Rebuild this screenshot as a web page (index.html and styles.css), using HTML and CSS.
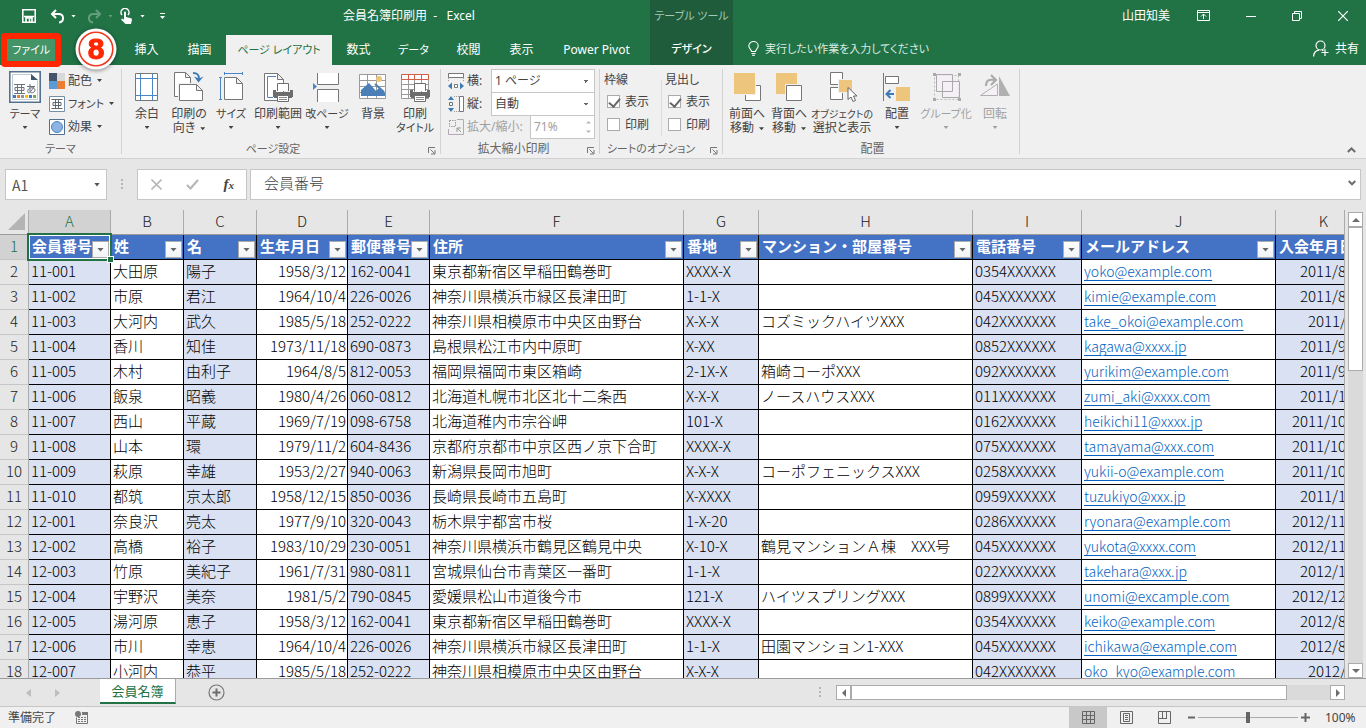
FILE: index.html
```html
<!DOCTYPE html>
<html lang="ja">
<head>
<meta charset="utf-8">
<title>会員名簿印刷用 - Excel</title>
<link rel="stylesheet" href="styles.css">
</head>
<body>
<svg class="defs" width="0" height="0" aria-hidden="true">
  <symbol id="printer" viewBox="0 0 22 19"><path d="M5.500 8V.5h11V8" fill="#fff" stroke="#6d6d6d"/><path d="M1 7h3v2h14V7h3v7h-1v1H2v-1H1z" fill="#6d6d6d"/><path d="M5.500 12.500h11v6h-11z" fill="#fff" stroke="#6d6d6d"/><path class="lines" d="M7 14.500h8M7 16.500h8"/></symbol>
  <symbol id="launch" viewBox="0 0 8 8"><path d="M.5 6V.5H7" fill="none" stroke="#777"/><path d="M2.500 2.500l4 4M7 3v4H3" fill="none" stroke="#777"/></symbol>
</svg>

<header class="top">
  <div class="titlebar">
    <div class="qat">
      <button aria-label="上書き保存"><svg width="16" height="16" viewBox="0 0 16 16"><path d="M1.800 1.800h12.400v12.400H1.800z" fill="none" stroke="#fff" stroke-width="1.600"/><path d="M3 8.500h10M5 14v-4h6v4M8.500 11v3" fill="none" stroke="#fff" stroke-width="1.600"/></svg></button>
      <button aria-label="元に戻す" class="undo"><svg width="15" height="15" viewBox="0 0 15 15"><path d="M6 1L2 5l4 4M2 5h6.500c6 0 6 8 .5 8.500" fill="none" stroke="#fff" stroke-width="2"/></svg><i class="caret"></i></button>
      <button aria-label="やり直し" class="dim"><svg width="15" height="15" viewBox="0 0 15 15"><path d="M9 1l4 4-4 4M13 5H6.500C.5 5 .5 13 6 13.500" fill="none" stroke="#fff" stroke-width="2"/></svg><i class="caret"></i></button>
      <button aria-label="タッチ/マウス モード" class="touch"><svg width="14" height="17" viewBox="0 0 14 17"><path d="M2 7a4 4 0 1 1 6 0" fill="none" stroke="#fff" stroke-width="1.500"/><path d="M4 4.500c0-1.500 2-1.500 2 0V9l5 1.200c1 .3 1 1 .9 2L11 16H5.500L1.500 12c-.8-1 .3-1.700 1-1.200L4 11.700z" fill="#fff"/></svg><i class="caret"></i></button>
      <button aria-label="クイック アクセス ツール バーのカスタマイズ" class="custom"><svg width="5" height="7" viewBox="0 0 5 7"><path d="M0 .5h5" stroke="#fff"/><path d="M0 3h5L2.500 6z" fill="#fff"/></svg></button>
    </div>
    <h1>会員名簿印刷用&nbsp; -&nbsp;&nbsp; Excel</h1>
  </div>
  <div class="context kana">テーブル ツール</div>
  <div class="window">
    <span class="user">山田知美</span>
    <button aria-label="リボンの表示オプション"><svg width="13" height="12" viewBox="0 0 13 12"><path d="M.5.500h12v10H.5zM.5 2.500h12M6.500 9V4M4 6.500L6.500 4 9 6.500" fill="none" stroke="#fff"/></svg></button>
    <button aria-label="最小化"><svg width="10" height="10" viewBox="0 0 10 10"><path d="M0 5.500h10" stroke="#fff"/></svg></button>
    <button aria-label="元のサイズに戻す"><svg width="10" height="10" viewBox="0 0 10 10"><path d="M.5 2.500h7v7h-7zM2.500 2V.5h7v7H8" fill="none" stroke="#fff"/></svg></button>
    <button aria-label="閉じる"><svg width="10" height="10" viewBox="0 0 10 10"><path d="M0 0l10 10M10 0L0 10" stroke="#fff" stroke-width="1.200"/></svg></button>
  </div>

  <nav class="tabs">
    <div class="file-slot"><button class="file kana">ファイル</button><span class="step"><svg width="42" height="42" viewBox="0 0 42 42"><circle cx="21" cy="21" r="20.500" fill="#fff"/><circle cx="21" cy="21" r="16.800" fill="none" stroke="#f0391f" stroke-width="1.600"/></svg><b>8</b></span></div>
    <button class="w53">挿入</button><button class="w53">描画</button><button class="w106 active kana">ページ レイアウト</button><button class="w53">数式</button><button class="w57 kana">データ</button><button class="w53">校閲</button><button class="w53">表示</button><button class="w97">Power Pivot</button>
  </nav>
  <button class="design kana">デザイン</button>
  <div class="tell">
    <button class="kana"><svg width="11" height="15" viewBox="0 0 11 15"><path d="M3.500 10.500C3.500 8.500.8 7.500.8 5a4.700 4.500 0 0 1 9.400 0c0 2.500-2.700 3.500-2.700 5.500zM3.500 12.500h4M4 14.300h3" fill="none" stroke="#fff" stroke-width="1.100"/></svg>実行したい作業を入力してください</button>
    <button><svg width="16" height="17" viewBox="0 0 16 17"><circle cx="7.500" cy="5.500" r="4.500" fill="none" stroke="#fff" stroke-width="1.200"/><path d="M.6 16.500C.8 13 3 10.500 6 10.200M9 10.200l1.500.6M12 9v7M8.500 12.500h7" fill="none" stroke="#fff" stroke-width="1.200"/></svg>共有</button>
  </div>
</header>

<section class="ribbon">
  <div class="group themes">
    <div class="tools">
      <button class="big"><svg width="32" height="32" viewBox="0 0 32 32"><path d="M.8.800h30.400v30.400H.8z" fill="#fff" stroke="#54708f" stroke-width="1.600"/><path d="M3.500 3.500h19l6 6v19h-25z" fill="#fff" stroke="#c3cad3"/><path d="M22 3v6h7z" fill="#44546a"/><path d="M5 13.500h11M5 22.500h11M8.500 13.500v9M12.500 13.500v9M6 16.500h9v3H6z" fill="none" stroke="#68737f"/><path d="M18 15.500h8M21 13v7c0 3 5 2 5-1s-6-3-7 0 1 4 3 1l3-4" fill="none" stroke="#68737f"/><path d="M4 24h3v3H4z" fill="#4472c4"/><path d="M8 24h3v3H8z" fill="#ed7d31"/><path d="M12 24h3v3h-3z" fill="#8f9299"/><path d="M16 24h3v3h-3z" fill="#ffc000"/><path d="M20 24h3v3h-3z" fill="#4178c8"/><path d="M24 24h3v3h-3z" fill="#70ad47"/></svg><span class="kana">テーマ</span><i class="caret"></i></button>
      <div class="stack">
        <button><svg width="16" height="16" viewBox="0 0 16 16"><path d="M0 0h8v8H0z" fill="#44546a"/><path d="M8 0h8v8H8z" fill="#d9d9d9"/><path d="M0 8h8v8H0z" fill="#5b9bd5"/><path d="M8 8h8v8H8z" fill="#ed7d31"/></svg>配色<i class="caret"></i></button>
        <button class="kana"><svg width="16" height="16" viewBox="0 0 16 16"><path d="M.5.500h15v15H.5z" fill="#fff" stroke="#7590ac"/><path d="M2.500 3.500h11M2.500 12.500h11M6.500 3.500v9M9.500 3.500v9M4 6.500h8v3H4z" fill="none" stroke="#62676d"/></svg>フォント<i class="caret"></i></button>
        <button><svg width="16" height="16" viewBox="0 0 16 16"><path d="M.5.500h15v15H.5z" fill="#fff" stroke="#54708f"/><circle cx="8" cy="8" r="5.500" fill="#8db4e3" stroke="#4a84c4"/></svg>効果<i class="caret"></i></button>
      </div>
    </div>
    <h2 class="kana">テーマ</h2>
  </div>

  <div class="group setup">
    <div class="tools">
      <button class="big w42"><svg width="32" height="32" viewBox="0 0 32 32"><path d="M4.500 2.500h22v27h-22z" fill="#fff" stroke="#777"/><path d="M9.500 3v26M21.500 3v26M5 7.500h21M5 24.500h21" stroke="#4a86c5" fill="none"/></svg><span>余白</span><i class="caret"></i></button>
      <button class="big w42"><svg width="32" height="32" viewBox="0 0 32 32"><path d="M1.500 1.500h11l5 5v19h-16zM12.500 1.500v5h5" fill="#fff" stroke="#777"/><path d="M5 12h20l6 6v13H5z" fill="#f0f0f0"/><path d="M6.500 13.500h17l6 6v10h-23zM23.500 13.500v6h6" fill="#fff" stroke="#777"/><path d="M20 2c5 0 6 2 6 6" fill="none" stroke="#3d7ab8" stroke-width="2"/><path d="M21 5.500l4.500 6 5-6-4.500 2z" fill="#3d7ab8"/></svg><span>印刷の<br>向き<i class="caret"></i></span></button>
      <button class="big w42"><svg width="32" height="32" viewBox="0 0 32 32"><path d="M9.500 6.500h12l6 6v16h-18zM21.500 6.500v6h6" fill="#fff" stroke="#777"/><path d="M9.500 2.500h18M9.500 1v3M27.500 1v3M5.500 6.500v22M4 6.500h3M4 28.500h3" stroke="#4a86c5" fill="none"/></svg><span class="kana">サイズ</span><i class="caret"></i></button>
      <button class="big w52"><svg width="32" height="32" viewBox="0 0 32 32"><path d="M2.500 2.500h13l6 6v21h-19zM15.500 2.500v6h6" fill="#fff" stroke="#777"/><path d="M14 5.500H5.500v21H11" stroke="#4a86c5" fill="none"/><use href="#printer" x="10" y="12" width="22" height="19"/></svg><span>印刷範囲</span><i class="caret"></i></button>
      <button class="big w46"><svg width="32" height="32" viewBox="0 0 32 32"><path d="M6.500 2v11.500h21V2M6.500 31V18.500h21V31" fill="#fff" stroke="#777"/><path d="M2 12v7l4-3.500z" fill="#4a86c5"/></svg><span class="kana">改ページ</span><i class="caret"></i></button>
      <button class="big w46"><svg width="32" height="32" viewBox="0 0 32 32"><path d="M2.500 3.500h26v24h-26zM2.500 9.500h26M2.500 15.500h26M2.500 21.500h26M10.500 3v24M19.500 3v24" fill="#fff" stroke="#9a9a9a"/><path d="M4 25v-6l8-7 7 8 3-3 6 5v3z" fill="#4a7fb8"/><path d="M18 13l9 8" stroke="#4a7fb8" stroke-width="2"/><circle cx="22" cy="8" r="3" fill="#edc57c"/></svg><span>背景</span></button>
      <button class="big w38"><svg width="32" height="32" viewBox="0 0 32 32"><path d="M2.500 3.500h27v24h-27zM2.500 13.500h27M2.500 18.500h27M2.500 23.500h27M9.500 8v20M15.500 8v20M22.500 8v20" fill="#fff" stroke="#9a9a9a"/><path d="M2.500 3.500h27v5h-27zM9.500 3v5M15.500 3v5M22.500 3v5" fill="#fff" stroke="#d35f48"/><g class="blue"><use href="#printer" x="10" y="12" width="22" height="19"/></g></svg><span>印刷<br><small class="kana">タイトル</small></span></button>
    </div>
    <h2 class="kana">ページ設定</h2>
    <button class="launch" aria-label="ページ設定"><svg width="8" height="8"><use href="#launch"/></svg></button>
  </div>

  <div class="group scale">
    <div class="tools rows">
      <div class="row"><svg width="16" height="16" viewBox="0 0 16 16"><path d="M.5.500h15v4H.5z" fill="#fff" stroke="#777"/><path d="M6.500 11.500h3v3h-3z" fill="#fff" stroke="#777"/><path d="M0 13l4-3.500v7zM16 13l-4-3.500v7z" fill="#3d7ab8"/><path d="M.5 5v4M15.500 5v4" stroke="#999" stroke-dasharray="1 1"/></svg><label for="sw">横:</label><select id="sw"><option>1 ページ</option></select></div>
      <div class="row"><svg width="16" height="16" viewBox="0 0 16 16"><path d="M11.500.500h4v15h-4z" fill="#fff" stroke="#777"/><path d="M1.500 6.500h3v3h-3z" fill="#fff" stroke="#777"/><path d="M3 0L0 4h6zM3 16l-3-4h6z" fill="#3d7ab8"/><path d="M6 .5h5M6 15.500h5" stroke="#999" stroke-dasharray="1 1"/></svg><label for="sh">縦:</label><select id="sh"><option>自動</option></select></div>
      <div class="row off"><svg width="16" height="16" viewBox="0 0 16 16"><path d="M9 .5h6.500v15H.5V10" fill="none" stroke="#b5a9b8"/><path d="M1.500 1.500h6v6h-6z" fill="none" stroke="#999" stroke-dasharray="1.500 1"/><path d="M13 13L9 9M9 13V9h4" stroke="#999" fill="none"/></svg><label for="sp">拡大/縮小:</label><div class="spin"><input id="sp" value="71%" disabled><svg width="5" height="14" viewBox="0 0 5 14"><path d="M0 3.500L2.500 1 5 3.500zM0 10.500L2.500 13 5 10.500z" fill="#b5b5b5"/></svg></div></div>
    </div>
    <h2>拡大縮小印刷</h2>
    <button class="launch" aria-label="拡大縮小印刷"><svg width="8" height="8"><use href="#launch"/></svg></button>
  </div>

  <div class="group options">
    <div class="tools">
      <fieldset><legend>枠線</legend><label><input type="checkbox" checked>表示</label><label><input type="checkbox">印刷</label></fieldset>
      <fieldset><legend>見出し</legend><label><input type="checkbox" checked>表示</label><label><input type="checkbox">印刷</label></fieldset>
    </div>
    <h2 class="kana">シートのオプション</h2>
    <button class="launch" aria-label="シートのオプション"><svg width="8" height="8"><use href="#launch"/></svg></button>
  </div>

  <div class="group arrange">
    <div class="tools">
      <button class="big w42"><svg width="32" height="32" viewBox="0 0 32 32"><path d="M14.500 14.500h15v15h-15z" fill="#fff" stroke="#777"/><path d="M2 1h23v23H2z" fill="#f0f0f0"/><path d="M3 2h21v21H3z" fill="#edc57c"/></svg><span>前面へ<br>移動<i class="caret"></i></span></button>
      <button class="big w42"><svg width="32" height="32" viewBox="0 0 32 32"><path d="M3 2h21v21H3z" fill="#edc57c"/><path d="M12 13h18v18H12z" fill="#f0f0f0"/><path d="M13.500 14.500h15v15h-15z" fill="#fff" stroke="#777"/></svg><span>背面へ<br>移動<i class="caret"></i></span></button>
      <button class="big w64"><svg width="32" height="32" viewBox="0 0 32 32"><path d="M4.500 1.500h12v12h-12zM4.500 16.500h12v12h-12z" fill="#fff" stroke="#777"/><path d="M12 8h15v14H12z" fill="#f0f0f0"/><path d="M13 9h13v12H13z" fill="#edc57c"/><path d="M22 16.500v12l3-2.500 2 4.500 2.500-1-2-4.500H31z" fill="#fff" stroke="#666"/></svg><span><small class="tight">オブジェクトの</small><br>選択と表示</span></button>
      <button class="big w46"><svg width="32" height="32" viewBox="0 0 32 32"><path d="M2.500 2v28" stroke="#777"/><path d="M4.500 5.500h13v7h-13z" fill="#fff" stroke="#777"/><path d="M15 16h14v14H15z" fill="#edc57c"/><path d="M13 23H6M9.500 19L5.500 23l4 4" fill="none" stroke="#3d7ab8" stroke-width="2"/></svg><span>配置</span><i class="caret"></i></button>
      <button class="big w52 off"><svg width="32" height="32" viewBox="0 0 32 32"><path d="M4.500 4.500h24v24h-24z" fill="none" stroke="#bbb" stroke-dasharray="2 2"/><path d="M6.500 3.500h16v17h-16zM12.500 10.500h17v16h-17z" fill="#f5f0f6" fill-opacity=".7" stroke="#a9a9a9"/><path d="M3 2h3v3H3zM28 2h3v3h-3zM3 27h3v3H3zM28 27h3v3h-3z" fill="#a9a9a9"/></svg><span class="kana">グループ化</span><i class="caret"></i></button>
      <button class="big w46 off"><svg width="32" height="32" viewBox="0 0 32 32"><path d="M1.500 24.500h17V13z" fill="#f5f0f6" stroke="#b0b0b0"/><path d="M20 5v20h11z" fill="#b0b0b0"/><path d="M7 15c0-6 3-7 9-6M12 4l5 5-5 5" fill="none" stroke="#a9a9a9" stroke-width="2"/></svg><span>回転</span><i class="caret"></i></button>
    </div>
    <h2>配置</h2>
  </div>
  <button class="collapse" aria-label="リボンを折りたたむ"><svg width="9" height="6" viewBox="0 0 9 6"><path d="M.8 5l3.700-3.500L8.200 5" fill="none" stroke="#6d6d6d" stroke-width="2"/></svg></button>
</section>

<section class="formula">
  <div class="name"><input aria-label="名前ボックス" value="A1"><i class="caret"></i></div>
  <span class="grip"></span>
  <div class="fx">
    <button aria-label="キャンセル"><svg width="11" height="11" viewBox="0 0 11 11"><path d="M.5.500l10 10M10.500.500l-10 10" stroke="#b8b8b8" stroke-width="1.600"/></svg></button>
    <button aria-label="入力"><svg width="13" height="11" viewBox="0 0 13 11"><path d="M1 6l3.500 3.500L12 1" fill="none" stroke="#b8b8b8" stroke-width="2.200"/></svg></button>
    <button aria-label="関数の挿入" class="fn">f<small>x</small></button>
  </div>
  <div class="bar"><input aria-label="数式バー" value="会員番号"><svg width="8" height="6" viewBox="0 0 8 6"><path d="M.7 1L4 4.300 7.300 1" fill="none" stroke="#6d6d6d" stroke-width="2"/></svg></div>
</section>

<main class="work">
  <div class="sheet">
    <table>
      <colgroup><col class="c-n"><col class="c-a"><col class="c-b"><col class="c-b"><col class="c-d"><col class="c-a"><col class="c-f"><col class="c-g"><col class="c-h"><col class="c-i"><col class="c-j"><col class="c-k"></colgroup>
      <thead><tr><th class="corner"><svg width="17" height="17" viewBox="0 0 17 17"><path d="M17 0v17H0z" fill="#b4b4b4"/></svg></th><th class="sel">A</th><th>B</th><th>C</th><th>D</th><th>E</th><th>F</th><th>G</th><th>H</th><th>I</th><th>J</th><th>K</th></tr></thead>
      <tbody>
      <tr class="heads"><th class="sel">1</th><td class="cursor"><div>会員番号<button aria-label="会員番号の絞り込み"></button></div></td><td><div>姓<button aria-label="姓の絞り込み"></button></div></td><td><div>名<button aria-label="名の絞り込み"></button></div></td><td><div>生年月日<button aria-label="生年月日の絞り込み"></button></div></td><td><div>郵便番号<button aria-label="郵便番号の絞り込み"></button></div></td><td><div>住所<button aria-label="住所の絞り込み"></button></div></td><td><div>番地<button aria-label="番地の絞り込み"></button></div></td><td><div>マンション・部屋番号<button aria-label="部屋番号の絞り込み"></button></div></td><td><div>電話番号<button aria-label="電話番号の絞り込み"></button></div></td><td><div>メールアドレス<button aria-label="メールアドレスの絞り込み"></button></div></td><td><div>入会年月日</div></td></tr>
      <tr><th>2</th><td>11-001</td><td>大田原</td><td>陽子</td><td>1958/3/12</td><td>162-0041</td><td>東京都新宿区早稲田鶴巻町</td><td>XXXX-X</td><td></td><td>0354XXXXXX</td><td><a href="#">yoko@example.com</a></td><td class="m">2011/8</td></tr>
      <tr><th>3</th><td>11-002</td><td>市原</td><td>君江</td><td>1964/10/4</td><td>226-0026</td><td>神奈川県横浜市緑区長津田町</td><td>1-1-X</td><td></td><td>045XXXXXXX</td><td><a href="#">kimie@example.com</a></td><td class="m">2011/8</td></tr>
      <tr><th>4</th><td>11-003</td><td>大河内</td><td>武久</td><td>1985/5/18</td><td>252-0222</td><td>神奈川県相模原市中央区由野台</td><td>X-X-X</td><td>コズミックハイツXXX</td><td>042XXXXXXX</td><td><a href="#">take_okoi@example.com</a></td><td class="s">2011/</td></tr>
      <tr><th>5</th><td>11-004</td><td>香川</td><td>知佳</td><td>1973/11/18</td><td>690-0873</td><td>島根県松江市内中原町</td><td>X-XX</td><td></td><td>0852XXXXXX</td><td><a href="#">kagawa@xxxx.jp</a></td><td class="m">2011/9</td></tr>
      <tr><th>6</th><td>11-005</td><td>木村</td><td>由利子</td><td>1964/8/5</td><td>812-0053</td><td>福岡県福岡市東区箱崎</td><td>2-1X-X</td><td>箱崎コーポXXX</td><td>092XXXXXXX</td><td><a href="#">yurikim@example.com</a></td><td class="m">2011/9</td></tr>
      <tr><th>7</th><td>11-006</td><td>飯泉</td><td>昭義</td><td>1980/4/26</td><td>060-0812</td><td>北海道札幌市北区北十二条西</td><td>X-X-X</td><td>ノースハウスXXX</td><td>011XXXXXXX</td><td><a href="#">zumi_aki@xxxx.com</a></td><td class="m">2011/1</td></tr>
      <tr><th>8</th><td>11-007</td><td>西山</td><td>平蔵</td><td>1969/7/19</td><td>098-6758</td><td>北海道稚内市宗谷岬</td><td>101-X</td><td></td><td>0162XXXXXX</td><td><a href="#">heikichi11@xxxx.jp</a></td><td class="l">2011/10</td></tr>
      <tr><th>9</th><td>11-008</td><td>山本</td><td>環</td><td>1979/11/2</td><td>604-8436</td><td>京都府京都市中京区西ノ京下合町</td><td>XXXX-X</td><td></td><td>075XXXXXXX</td><td><a href="#">tamayama@xxx.com</a></td><td class="l">2011/10</td></tr>
      <tr><th>10</th><td>11-009</td><td>萩原</td><td>幸雄</td><td>1953/2/27</td><td>940-0063</td><td>新潟県長岡市旭町</td><td>X-X-X</td><td>コーポフェニックスXXX</td><td>0258XXXXXX</td><td><a href="#">yukii-o@example.com</a></td><td class="l">2011/10</td></tr>
      <tr><th>11</th><td>11-010</td><td>都筑</td><td>京太郎</td><td>1958/12/15</td><td>850-0036</td><td>長崎県長崎市五島町</td><td>X-XXXX</td><td></td><td>0959XXXXXX</td><td><a href="#">tuzukiyo@xxx.jp</a></td><td class="m">2011/1</td></tr>
      <tr><th>12</th><td>12-001</td><td>奈良沢</td><td>亮太</td><td>1977/9/10</td><td>320-0043</td><td>栃木県宇都宮市桜</td><td>1-X-20</td><td></td><td>0286XXXXXX</td><td><a href="#">ryonara@example.com</a></td><td class="l">2012/11</td></tr>
      <tr><th>13</th><td>12-002</td><td>高橋</td><td>裕子</td><td>1983/10/29</td><td>230-0051</td><td>神奈川県横浜市鶴見区鶴見中央</td><td>X-10-X</td><td>鶴見マンションＡ棟　XXX号</td><td>045XXXXXXX</td><td><a href="#">yukota@xxxx.com</a></td><td class="l">2012/11</td></tr>
      <tr><th>14</th><td>12-003</td><td>竹原</td><td>美紀子</td><td>1961/7/31</td><td>980-0811</td><td>宮城県仙台市青葉区一番町</td><td>1-1-X</td><td></td><td>022XXXXXXX</td><td><a href="#">takehara@xxx.jp</a></td><td class="m">2012/1</td></tr>
      <tr><th>15</th><td>12-004</td><td>宇野沢</td><td>美奈</td><td>1981/5/2</td><td>790-0845</td><td>愛媛県松山市道後今市</td><td>121-X</td><td>ハイツスプリングXXX</td><td>0899XXXXXX</td><td><a href="#">unomi@excample.com</a></td><td class="l">2012/12</td></tr>
      <tr><th>16</th><td>12-005</td><td>湯河原</td><td>恵子</td><td>1958/3/12</td><td>162-0041</td><td>東京都新宿区早稲田鶴巻町</td><td>XXXX-X</td><td></td><td>0354XXXXXX</td><td><a href="#">keiko@example.com</a></td><td class="m">2012/8</td></tr>
      <tr><th>17</th><td>12-006</td><td>市川</td><td>幸恵</td><td>1964/10/4</td><td>226-0026</td><td>神奈川県横浜市緑区長津田町</td><td>1-1-X</td><td>田園マンション1-XXX</td><td>045XXXXXXX</td><td><a href="#">ichikawa@example.com</a></td><td class="m">2012/8</td></tr>
      <tr><th>18</th><td>12-007</td><td>小河内</td><td>恭平</td><td>1985/5/18</td><td>252-0222</td><td>神奈川県相模原市中央区由野台</td><td>X-X-X</td><td></td><td>042XXXXXXX</td><td><a href="#">oko_kyo@example.com</a></td><td class="s">2012/</td></tr>
      </tbody>
    </table>
  </div>
  <div class="vscroll">
    <button aria-label="上へスクロール"><svg width="8" height="4" viewBox="0 0 8 4"><path d="M0 4l4-4 4 4z" fill="#6d6d6d"/></svg></button>
    <div class="track"><div class="thumb"></div></div>
    <button aria-label="下へスクロール"><svg width="8" height="4" viewBox="0 0 8 4"><path d="M0 0l4 4 4-4z" fill="#6d6d6d"/></svg></button>
  </div>
</main>

<nav class="sheets">
  <div class="steps"><svg width="5" height="8" viewBox="0 0 5 8"><path d="M5 0v8L0 4z" fill="#bdbdbd"/></svg><svg width="5" height="8" viewBox="0 0 5 8"><path d="M0 0v8l5-4z" fill="#bdbdbd"/></svg></div>
  <button class="sheet-tab">会員名簿</button>
  <button class="add" aria-label="新しいシート"><svg width="17" height="17" viewBox="0 0 17 17"><circle cx="8.500" cy="8.500" r="7.500" fill="none" stroke="#777" stroke-width="1.200"/><path d="M8.500 4.500v8M4.500 8.500h8" stroke="#6d6d6d" stroke-width="2"/></svg></button>
  <span class="grip"></span>
  <div class="hscroll">
    <button aria-label="左へスクロール"><svg width="4" height="8" viewBox="0 0 4 8"><path d="M4 0v8L0 4z" fill="#6d6d6d"/></svg></button>
    <div class="track"><div class="thumb"></div></div>
    <button aria-label="右へスクロール"><svg width="4" height="8" viewBox="0 0 4 8"><path d="M0 0v8l4-4z" fill="#6d6d6d"/></svg></button>
  </div>
</nav>

<footer class="status">
  <span>準備完了</span>
  <svg class="macro" width="13" height="13" viewBox="0 0 13 13"><circle cx="3" cy="3" r="3" fill="#777"/><path d="M7 1h6v3H7z" fill="#777"/><path d="M1.500 6.500v6h11v-9" fill="none" stroke="#777"/><path d="M3 6.500h8M3 8.500h8M3 10.500h8" stroke="#777" stroke-dasharray="2 1"/></svg>
  <div class="views">
    <button class="on" aria-label="標準"><svg width="13" height="13" viewBox="0 0 13 13"><path d="M.5.500h12v12H.5zM4.500 0v13M8.500 0v13M0 4.500h13M0 8.500h13" fill="none" stroke="#666"/></svg></button>
    <button aria-label="ページ レイアウト"><svg width="13" height="13" viewBox="0 0 13 13"><path d="M.5.500h12v12H.5zM3.500 2.500h6v8h-6zM5 4.500h3M5 6.500h3M5 8.500h3" fill="none" stroke="#666"/></svg></button>
    <button aria-label="改ページ プレビュー"><svg width="13" height="13" viewBox="0 0 13 13"><path d="M.5.500h12v12H.5zM4.500 0v7.500M8.500 0v7.500M1 7.500h8" fill="none" stroke="#666"/></svg></button>
  </div>
  <div class="zoom"><button aria-label="縮小"><svg width="7" height="9" viewBox="0 0 7 9"><path d="M0 4.500h7" stroke="#666" stroke-width="2"/></svg></button><input type="range" aria-label="ズーム" min="0" max="200" value="100"><button aria-label="拡大"><svg width="9" height="9" viewBox="0 0 9 9"><path d="M0 4.500h9M4.500 0v9" stroke="#666" stroke-width="2"/></svg></button></div>
  <span class="percent">100%</span>
</footer>
</body>
</html>
```
FILE: styles.css
```css
* { box-sizing: border-box; }
html, body { height: 100%; }
body {
  margin: 0;
  display: flex;
  flex-direction: column;
  overflow: hidden;
  background: #e6e6e6;
  color: #444;
  font: 12px/14px "Noto Sans", "Noto Sans CJK JP", sans-serif;
}
.defs { position: absolute; }
button, input, select {
  font: inherit;
  color: inherit;
  background: none;
  border: 0;
  padding: 0;
  margin: 0;
}
h1, h2 { margin: 0; font: inherit; }
svg { display: block; flex: none; }
.kana { font-size: 11px; }
.tight { font-size: 10px; }
.caret {
  display: inline-block;
  width: 5px;
  height: 3px;
  background: currentColor;
  clip-path: polygon(0 0, 100% 0, 50% 100%);
  vertical-align: middle;
}
.blue .lines { stroke: #3d7ab8; }
.lines { stroke: #8a8a8a; }

/* title bar and tabs */
.top {
  display: grid;
  grid-template-columns: 650px 83px 1fr;
  grid-template-rows: 32px 33px;
  background: #217346;
  color: #fff;
  font-feature-settings: "palt";
}
.titlebar { display: flex; align-items: center; }
.qat { display: flex; align-items: center; width: 343px; padding-left: 21px; gap: 11px; }
.qat button { display: flex; align-items: center; gap: 6px; height: 32px; }
.qat .undo { margin-left: 2px; }
.qat .dim { opacity: .3; }
.qat .touch { margin-left: -4px; }
.qat .custom { margin-left: 4px; }
.context { background: #1e5c3b; color: #a5c7b3; line-height: 32px; text-align: center; }
.window { display: flex; justify-content: flex-end; align-items: center; padding-right: 18px; }
.window button { display: flex; margin-left: 36px; }
.window .user { font-feature-settings: normal; margin-right: -9px; }
.tabs { display: flex; align-items: flex-end; }
.tabs > button { height: 30px; }
.tabs .active { background: #f0f0f0; color: #217346; }
.w38 { width: 38px; } .w42 { width: 42px; } .w46 { width: 46px; } .w52 { width: 52px; }
.w53 { width: 53px; } .w57 { width: 57px; } .w64 { width: 64px; } .w97 { width: 97px; } .w106 { width: 106px; }
.file-slot { position: relative; width: 120px; height: 33px; z-index: 1; }
.file {
  position: absolute;
  left: 1px;
  top: 1px;
  width: 60px;
  height: 34px;
  border: 6px solid #ff2600;
  border-radius: 4px;
  background: #439467;
}
.step { position: absolute; left: 75px; top: -4px; width: 42px; height: 42px; filter: drop-shadow(0 1px 2px #0007); }
.step b {
  position: absolute;
  inset: 0;
  font: bold 30px/42px "Liberation Sans", sans-serif;
  color: #ff2600;
  -webkit-text-stroke: 1px #ff2600;
  text-align: center;
}
.design { background: #1e5c3b; font-weight: 500; }
.tell { display: flex; justify-content: space-between; padding: 0 7px 0 15px; }
.tell button { display: flex; align-items: center; gap: 6px; }
.tell .kana { color: #dcebe2; }

/* ribbon */
.ribbon {
  position: relative;
  display: flex;
  background: #f0f0f0;
  border-bottom: 1px solid #d2d2d2;
  padding: 4px 0;
  font-feature-settings: "palt";
}
.group {
  position: relative;
  display: flex;
  flex-direction: column;
  justify-content: space-between;
  min-height: 85px;
  border-right: 1px solid #d2d2d2;
}
.group h2 { text-align: center; color: #666; line-height: 10px; }
.setup h2, .scale h2, .options h2 { padding-right: 20px; }
.tools { display: flex; align-items: flex-start; }
.big { display: flex; flex-direction: column; align-items: center; padding-top: 2px; white-space: nowrap; }
.big span { margin-top: 4px; line-height: 14px; }
.big > .caret { margin-top: 5px; }
.big span .caret, .stack .caret { margin-left: 5px; }
.off { color: #a0a0a0; }
.themes { width: 122px; }
.themes .tools { padding-left: 9px; gap: 8px; }
.stack { display: flex; flex-direction: column; }
.stack button { display: flex; align-items: center; height: 23px; }
.stack svg { margin-right: 3px; }
.setup { width: 319px; padding-left: 4px; }
.scale { width: 159px; padding-left: 7px; }
.options { width: 123px; }
.arrange { width: 297px; padding-left: 3px; }
.launch { position: absolute; right: 4px; bottom: -1px; }
.collapse { position: absolute; right: 10px; bottom: 5px; }
.rows { flex-direction: column; padding-right: 4px; }
.row { display: flex; align-items: center; width: 100%; height: 23px; gap: 3px; white-space: nowrap; }
.row select, .spin {
  margin-left: auto;
  width: 104px;
  height: 24px;
  border: 1px solid #c6c6c6;
  padding: 0 3px;
  background-color: #fff;
}
.row select {
  appearance: none;
  background: linear-gradient(to bottom left, #666 50%, transparent 50%) 91px 10px / 3px 3px no-repeat,
    linear-gradient(to bottom right, #666 50%, transparent 50%) 94px 10px / 3px 3px no-repeat, #fff;
}
.spin { display: flex; align-items: center; width: 65px; }
.spin input { flex: 1; min-width: 0; }
.options .tools { padding: 0 0 0 4px; }
fieldset { border: 0; margin: 0; padding: 0; width: 61px; }
fieldset + fieldset { border-left: 1px solid #dcdcdc; padding-left: 3px; margin-left: -4px; }
legend { padding: 0; line-height: 21px; }
fieldset label { display: flex; align-items: center; gap: 5px; height: 23px; margin-left: 3px; }
input[type=checkbox] {
  appearance: none;
  position: relative;
  width: 13px;
  height: 13px;
  background: #fff;
  border: 1px solid #ababab;
}
input[type=checkbox]:checked::after {
  content: "";
  position: absolute;
  left: 3px;
  top: 0;
  width: 5px;
  height: 9px;
  border: solid #666;
  border-width: 0 2px 2px 0;
  transform: rotate(40deg);
}

/* formula bar */
.formula { display: flex; align-items: center; padding: 10px 5px; height: 51px; font: 14px/20px "Noto Sans CJK JP", sans-serif; }
.name, .fx, .bar { display: flex; align-items: center; height: 31px; background: #fff; border: 1px solid #c6c6c6; }
.name { width: 102px; padding: 0 6px; color: #555; }
.name input { width: 82px; }
.name .caret { width: 7px; height: 4px; }
.grip { width: 2px; height: 11px; background: repeating-linear-gradient(#b5b5b5 0 2px, transparent 2px 4px); }
.formula .grip { margin: 0 14px; }
.fx { width: 110px; justify-content: space-between; padding: 0 12px 0 13px; }
.fn { font: italic bold 15px/20px "Liberation Serif", serif; }
.fn small { font-size: 11px; }
.bar { flex: 1; margin-left: 3px; padding: 0 4px 3px 13px; font-size: 15px; font-weight: 300; }
.bar input { flex: 1; }

/* grid */
.work { flex: 1; min-height: 0; display: flex; border-bottom: 1px solid #9b9b9b; }
.sheet { flex: 1; min-width: 0; overflow: hidden; border-right: 1px solid #ababab; }
table {
  table-layout: fixed;
  width: 1372px;
  border-collapse: separate;
  border-spacing: 0;
  font: 300 15px/22px "Noto Sans CJK JP", sans-serif;
}
.c-n { width: 29px; } .c-a { width: 82px; } .c-b { width: 73px; } .c-d { width: 91px; }
.c-f { width: 254px; } .c-g { width: 75px; } .c-h { width: 214px; } .c-i { width: 109px; }
.c-j { width: 194px; } .c-k { width: 96px; }
th, td { height: 25px; padding: 0; white-space: nowrap; overflow: hidden; vertical-align: top; }
th { background: #e6e6e6; color: #222; font-weight: 300; border-right: 1px solid #ababab; border-bottom: 1px solid #c6c6c6; }
thead th { border-bottom-color: #9b9b9b; }
.corner svg { margin: 3px 0 0 8px; }
th.sel { background: #d2d2d2; color: #217346; }
td {
  padding-left: 2px;
  background: #fff;
  color: #000;
  border-right: 1px solid #000;
  border-bottom: 1px solid #000;
}
td:nth-child(2), td:nth-child(4), td:nth-child(6), td:nth-child(8), td:nth-child(10), td:nth-child(12) { background: #d9e1f2; }
td:nth-child(5) { text-align: right; padding: 0 1px 0 0; }
td.s { padding-left: 32px; }
td.m { padding-left: 24px; }
td.l { padding-left: 16px; }
td a { color: #0563c1; font-size: 14px; text-underline-offset: 3px; text-decoration-thickness: 1px; }
tr.heads td { background: #4472c4; color: #fff; font-weight: 700; padding: 0 1px 0 3px; text-align: left; }
.heads div { display: flex; justify-content: space-between; height: 24px; }
.heads div button {
  flex: none;
  align-self: flex-end;
  display: grid;
  place-items: center;
  width: 17px;
  height: 17px;
  margin: 0 0 1px -4px;
  border: 1px solid #ababab;
  background: linear-gradient(#fff, #f0f2f5);
}
.heads button::after { content: ""; width: 7px; height: 4px; background: #666; clip-path: polygon(0 0, 100% 0, 50% 100%); }
td.cursor { position: relative; overflow: visible; }
.cursor::before { content: ""; position: absolute; inset: -2px; border: 2px solid #217346; outline: 1px solid #fff; outline-offset: -3px; pointer-events: none; }
.cursor::after { content: ""; position: absolute; right: -3px; bottom: -3px; width: 5px; height: 5px; background: #217346; outline: 1px solid #fff; }

/* scroll bars */
.vscroll { display: flex; flex-direction: column; width: 21px; padding: 2px 3px 0; }
.vscroll button, .hscroll button { display: grid; place-items: center; width: 15px; height: 15px; background: #fff; border: 1px solid #ababab; }
.track { flex: 1; background: #dadada; }
.vscroll .thumb { height: 33%; background: #fff; border: 1px solid #ababab; }
.sheets { display: flex; align-items: center; height: 27px; }
.steps { display: flex; gap: 24px; width: 100px; padding-left: 26px; }
.sheet-tab {
  align-self: flex-start;
  width: 76px;
  height: 25px;
  background: #fff;
  color: #217346;
  font: 400 13px/22px "Noto Sans CJK JP", sans-serif;
  border-right: 1px solid #ababab;
  border-bottom: 2px solid #217346;
}
.add { margin-left: 32px; }
.sheets .grip { margin-left: auto; margin-right: 15px; }
.hscroll { display: flex; width: 509px; margin-right: 21px; }
.hscroll .thumb { width: 91%; height: 15px; background: #fff; border: 1px solid #ababab; }

/* status bar */
.status { display: flex; align-items: center; height: 22px; padding: 0 8px; background: #f0f0f0; border-top: 1px solid #c6c6c6; }
.macro { margin-left: 19px; }
.views { display: flex; margin-left: auto; }
.views button { display: grid; place-items: center; width: 38px; height: 21px; }
.views .on { background: #c8c8c8; }
.zoom { display: flex; align-items: center; gap: 3px; margin-left: 5px; }
.zoom input { appearance: none; width: 100px; height: 11px; background: linear-gradient(#ababab, #ababab) center / 100% 1px no-repeat; }
.zoom input::-webkit-slider-thumb { appearance: none; width: 4px; height: 11px; background: #666; }
.percent { width: 33px; margin-left: 15px; }
```
